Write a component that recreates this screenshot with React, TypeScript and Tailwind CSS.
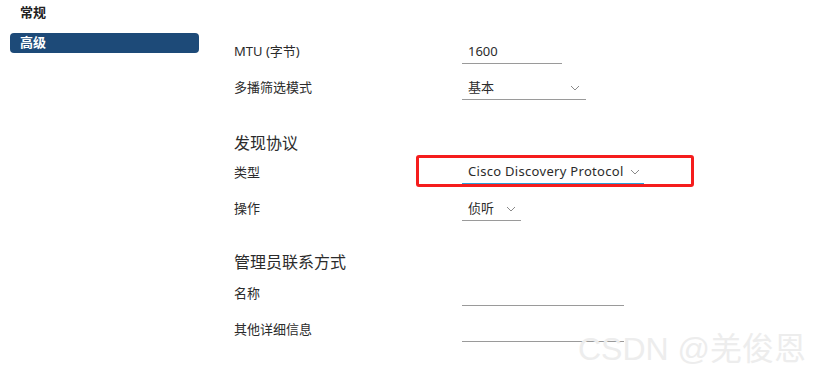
import React from "react";

const font = { fontFamily: '"Noto Sans", "Noto Sans CJK SC", sans-serif' };

function Chevron() {
  return (
    <svg width="10" height="6" viewBox="0 0 10 6" className="shrink-0">
      <polyline points="1,1 5,5 9,1" fill="none" stroke="#8a8a8a" strokeWidth="1" />
    </svg>
  );
}

function Row({ label, children }: { label: string; children: React.ReactNode }) {
  return (
    <div className="flex h-[36px] items-center">
      <div className="w-[228px] text-[13px] text-[#2b2b2b]">{label}</div>
      {children}
    </div>
  );
}

function Input({ value, width }: { value?: string; width: string }) {
  return (
    <div className={`flex h-[24px] items-center border-b border-[#9a9a9a] pl-[6px] text-[13px] text-[#2b2b2b] ${width}`}>
      {value}
    </div>
  );
}

export default function App() {
  return (
    <div className="relative h-[381px] w-[823px] overflow-hidden bg-white" style={font}>
      <div className="flex">
        <div className="w-[199px] shrink-0 pl-[10px] pt-[3px]">
          <div className="flex h-[20px] items-center pl-[10px] text-[13px] font-bold text-[#222]">常规</div>
          <div className="mt-[10px] flex h-[20px] items-center rounded-[4px] bg-[#1d4a78] pl-[10px] text-[13px] font-bold text-white">
            高级
          </div>
        </div>
        <div className="ml-[35px] pt-[34px]">
          <Row label="MTU (字节)">
            <Input value="1600" width="w-[100px]" />
          </Row>
          <Row label="多播筛选模式">
            <div className="flex h-[24px] w-[124px] items-center justify-between border-b border-[#9a9a9a] pl-[6px] pr-[6px] text-[13px] text-[#2b2b2b]">
              <span>基本</span>
              <Chevron />
            </div>
          </Row>
          <div className="mt-[24px] flex h-[25px] items-center text-[16px] text-[#2b2b2b]">发现协议</div>
          <div className="relative">
            <Row label="类型">
              <div className="flex h-[24px] w-[182px] items-center gap-[6px] border-b-2 border-[#2a9fd8] pl-[6px] text-[13px] text-[#2b2b2b]">
                <span className="tracking-[0.3px]">Cisco Discovery Protocol</span>
                <Chevron />
              </div>
            </Row>
            <div className="absolute left-[182px] top-[0px] h-[32px] w-[278px] rounded-[3px] border-[3px] border-[#f51d1d]" />
          </div>
          <Row label="操作">
            <div className="flex h-[24px] w-[59px] items-center gap-[12px] border-b border-[#9a9a9a] pl-[6px] text-[13px] text-[#2b2b2b]">
              <span>侦听</span>
              <Chevron />
            </div>
          </Row>
          <div className="mt-[23px] flex h-[24px] items-center text-[16px] text-[#2b2b2b]">管理员联系方式</div>
          <div className="mt-[2px]">
            <Row label="名称">
              <Input width="w-[162px]" />
            </Row>
            <Row label="其他详细信息">
              <Input width="w-[162px]" />
            </Row>
          </div>
        </div>
      </div>
      <div
        className="absolute left-[578px] top-[331px] text-[32px] leading-[37px] text-[#ededed]"
        style={{ fontFamily: '"Liberation Sans", "Noto Sans CJK SC", sans-serif' }}
      >
        CSDN @羌俊恩
      </div>
    </div>
  );
}
